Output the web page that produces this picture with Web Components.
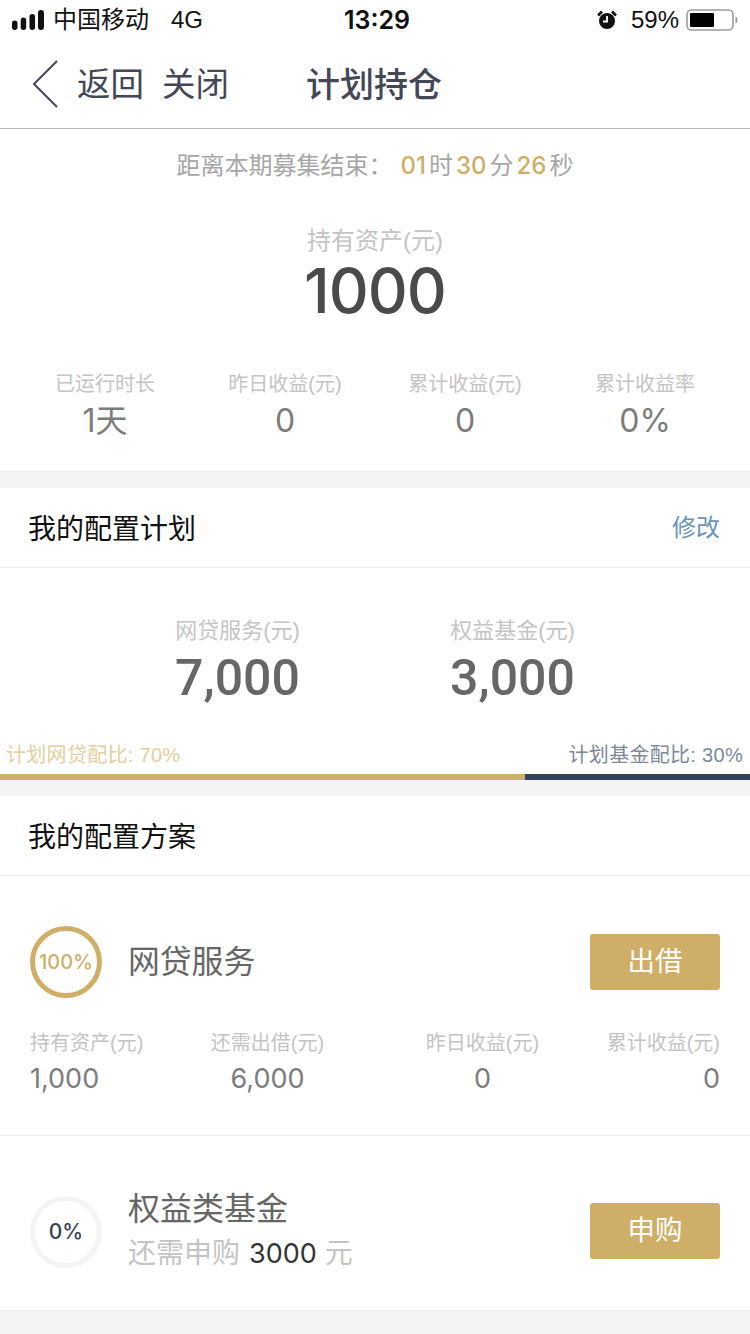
<!DOCTYPE html>
<html lang="zh">
<head>
<meta charset="utf-8">
<title>计划持仓</title>
<style>
    html, body { margin: 0; padding: 0; }
    body {
        width: 750px;
        height: 1334px;
        overflow: hidden;
        background: #f4f4f4;
        font-family: "Liberation Sans", "Noto Sans CJK SC", sans-serif;
        --gold: #cfae68;
        --navy: #34435c;
    }
</style>
</head>
<body>
<status-bar></status-bar>
<nav-bar heading="计划持仓"></nav-bar>
<asset-summary></asset-summary>
<config-section heading="我的配置计划" action="修改" style="margin-top:16px">
    <plan-amounts></plan-amounts>
    <ratio-bar></ratio-bar>
</config-section>
<config-section heading="我的配置方案" style="margin-top:16px">
    <loan-scheme></loan-scheme>
    <fund-scheme></fund-scheme>
</config-section>

<script>
    const ROBOTO = '"Roboto", "Noto Sans CJK SC", sans-serif';
    const INTER = '"Inter", "Noto Sans CJK SC", sans-serif';

    customElements.define('status-bar', class extends HTMLElement {
        constructor() {
            super();
            this.attachShadow({ mode: 'open' }).innerHTML = `
                <style>
                    :host { display: grid; grid-template-columns: 1fr auto 1fr; align-items: center; height: 40px; padding: 0 12px; background: #fff; color: #111; font-size: 24px; line-height: 28px; }
                    .left, .right { display: flex; align-items: center; }
                    .left span:first-of-type { margin-left: 9px; }
                    .left span:last-of-type { margin-left: 22px; }
                    .time { font-family: ${INTER}; font-size: 25px; font-weight: 600; position: relative; left: 2px; }
                    .right { justify-content: flex-end; }
                    .right span { margin: 0 7px 0 14px; }
                    svg { display: block; }
                </style>
                <div class="left">
                    <svg width="32" height="20" viewBox="0 0 32 20" fill="#111">
                        <rect x="0" y="10.500" width="5.500" height="9.500" rx="2.750"/>
                        <rect x="8.700" y="7.500" width="5.500" height="12.500" rx="2.750"/>
                        <rect x="17.500" y="4" width="5.500" height="16" rx="2.750"/>
                        <rect x="26" y="0" width="6" height="20" rx="3"/>
                    </svg>
                    <span>中国移动</span><span>4G</span>
                </div>
                <div class="time">13:29</div>
                <div class="right">
                    <svg width="20" height="20" viewBox="0 0 20 20">
                        <circle cx="10" cy="11" r="8" fill="#111"/>
                        <path d="M10 6v5.500H6" fill="none" stroke="#fff" stroke-width="1.800"/>
                        <path d="M1 5.500 5 1.500M19 5.500 15 1.500" stroke="#111" stroke-width="2.600"/>
                    </svg>
                    <span>59%</span>
                    <svg width="52" height="22" viewBox="0 0 52 22">
                        <rect x="1" y="1" width="46" height="20" rx="4.500" fill="none" stroke="#9c9c9c" stroke-width="1.600"/>
                        <rect x="4" y="4" width="24" height="14" rx="1" fill="#000"/>
                        <path d="M49.500 7.500c1.500.5 2 2 2 3.500s-.5 3-2 3.500z" fill="#9c9c9c"/>
                    </svg>
                </div>`;
        }
    });

    customElements.define('nav-bar', class extends HTMLElement {
        constructor() {
            super();
            this.attachShadow({ mode: 'open' }).innerHTML = `
                <style>
                    :host { display: grid; grid-template-columns: 1fr auto 1fr; align-items: center; height: 86px; padding: 2px 0 0 32px; background: #fff; color: #444757; border-bottom: 1px solid #b8b8b8; font-size: 33.500px; line-height: 40px; }
                    .links { display: flex; align-items: center; }
                    svg { display: block; margin: -2px 19px 0 0; }
                    .close { margin-left: 18px; }
                    h1 { margin: 0; font-size: 34px; font-weight: 500; position: relative; left: -17px; }
                </style>
                <div class="links">
                    <svg width="26" height="48" viewBox="0 0 26 48"><path d="M25 1 2 24l23 23" fill="none" stroke="#444757" stroke-width="2"/></svg>
                    <span>返回</span><span class="close">关闭</span>
                </div>
                <h1>${this.getAttribute('heading')}</h1>
                <div></div>`;
        }
    });

    customElements.define('stat-item', class extends HTMLElement {
        constructor() {
            super();
            this.attachShadow({ mode: 'open' }).innerHTML = `
                <style>
                    :host { display: block; text-align: center; }
                    .label { font-size: 20px; line-height: 28px; color: #c4c4c4; }
                    .value { font-family: ${INTER}; font-size: 32px; line-height: 46px; color: #7c7c7c; }
                </style>
                <div class="label">${this.getAttribute('label')}</div>
                <div class="value">${this.getAttribute('value')}</div>`;
        }
    });

    customElements.define('asset-summary', class extends HTMLElement {
        constructor() {
            super();
            this.attachShadow({ mode: 'open' }).innerHTML = `
                <style>
                    :host { display: block; background: #fff; border-bottom: 1px solid #ececec; text-align: center; padding-bottom: 27px; }
                    .count { display: flex; justify-content: center; height: 74px; line-height: 74px; font-size: 24px; color: #a6a6a6; }
                    .count b { font-family: ${INTER}; font-weight: 500; color: var(--gold); margin: 0 3px; }
                    .count .sep { margin-right: 5px; }
                    .label { margin-top: 20px; font-size: 24px; line-height: 36px; color: #c4c4c4; }
                    .total { font-family: ${INTER}; font-size: 62px; line-height: 64px; font-weight: 500; color: #4a4a4a; letter-spacing: -1px; }
                    .stats { display: grid; grid-template-columns: repeat(4, 1fr); padding: 0 15px; margin-top: 47px; }
                </style>
                <div class="count"><span class="sep">距离本期募集结束：</span><b>01</b><span>时</span><b>30</b><span>分</span><b>26</b><span>秒</span></div>
                <div class="label">持有资产(元)</div>
                <div class="total">1000</div>
                <div class="stats">
                    <stat-item label="已运行时长" value="1天"></stat-item>
                    <stat-item label="昨日收益(元)" value="0"></stat-item>
                    <stat-item label="累计收益(元)" value="0"></stat-item>
                    <stat-item label="累计收益率" value="0%"></stat-item>
                </div>`;
        }
    });

    customElements.define('config-section', class extends HTMLElement {
        constructor() {
            super();
            const action = this.getAttribute('action');
            this.attachShadow({ mode: 'open' }).innerHTML = `
                <style>
                    :host { display: block; background: #fff; }
                    header { display: flex; justify-content: space-between; align-items: center; height: 79px; padding: 0 30px 0 28px; border-bottom: 1px solid #ececec; line-height: 36px; }
                    h2 { margin: 0; padding-top: 4px; font-size: 28px; font-weight: 400; color: #111; }
                    a { font-size: 24px; color: #6a93b8; }
                </style>
                <header><h2>${this.getAttribute('heading')}</h2>${action ? `<a>${action}</a>` : ''}</header>
                <slot></slot>`;
        }
    });

    customElements.define('plan-amounts', class extends HTMLElement {
        constructor() {
            super();
            this.attachShadow({ mode: 'open' }).innerHTML = `
                <style>
                    :host { display: flex; justify-content: center; padding-top: 47px; text-align: center; }
                    div { width: 275px; }
                    .label { font-size: 22px; line-height: 32px; color: #c4c4c4; }
                    .value { font-family: ${ROBOTO}; font-size: 50px; line-height: 63px; font-weight: 500; color: #666; }
                </style>
                <div><div class="label">网贷服务(元)</div><div class="value">7,000</div></div>
                <div><div class="label">权益基金(元)</div><div class="value">3,000</div></div>`;
        }
    });

    customElements.define('ratio-bar', class extends HTMLElement {
        constructor() {
            super();
            this.attachShadow({ mode: 'open' }).innerHTML = `
                <style>
                    :host { display: block; margin-top: 30px; }
                    .labels { display: flex; justify-content: space-between; padding: 0 7px 0 6px; font-size: 20px; line-height: 30px; letter-spacing: .3px; }
                    .gold { color: #e3cfa0; }
                    .navy { color: #7d8899; }
                    .bar { display: flex; height: 6px; margin-top: 4px; }
                    .bar i { display: block; }
                </style>
                <div class="labels"><span class="gold">计划网贷配比: 70%</span><span class="navy">计划基金配比: 30%</span></div>
                <div class="bar">
                    <i style="width:70%;background:var(--gold)"></i>
                    <i style="width:30%;background:var(--navy)"></i>
                </div>`;
        }
    });

    customElements.define('progress-ring', class extends HTMLElement {
        constructor() {
            super();
            this.attachShadow({ mode: 'open' }).innerHTML = `
                <style>
                    :host { display: flex; align-items: center; justify-content: center; flex: none; box-sizing: border-box; width: 72px; height: 72px; border-radius: 50%; border: 5px solid var(--ring); color: var(--ink); font-family: ${INTER}; font-size: var(--ring-size, 20px); font-weight: 500; line-height: 24px; }
                </style>
                <slot></slot>`;
        }
    });

    customElements.define('gold-button', class extends HTMLElement {
        constructor() {
            super();
            this.attachShadow({ mode: 'open' }).innerHTML = `
                <style>
                    :host { display: flex; align-items: center; justify-content: center; flex: none; width: 130px; height: 56px; margin-left: auto; border-radius: 3px; background: var(--gold); color: #fff; font-size: 27.500px; line-height: 32px; }
                </style>
                <slot></slot>`;
        }
    });

    customElements.define('loan-scheme', class extends HTMLElement {
        constructor() {
            super();
            this.attachShadow({ mode: 'open' }).innerHTML = `
                <style>
                    :host { display: block; padding: 50px 30px 34px; border-bottom: 1px solid #ececec; }
                    .top { display: flex; align-items: center; }
                    .name { margin-left: 26px; font-size: 31.800px; line-height: 40px; color: #666; }
                    .grid { display: grid; grid-template-columns: 130px 215px 215px 130px; margin-top: 31px; text-align: center; }
                    .grid > div:first-child { text-align: left; white-space: nowrap; }
                    .grid > div:last-child { text-align: right; white-space: nowrap; }
                    .label { font-size: 20px; line-height: 28px; color: #c4c4c4; }
                    .value { font-family: ${INTER}; font-size: 27px; line-height: 44px; color: #7c7c7c; }
                    progress-ring { --ring: var(--gold); --ink: var(--gold); }
                </style>
                <div class="top">
                    <progress-ring>100%</progress-ring>
                    <span class="name">网贷服务</span>
                    <gold-button>出借</gold-button>
                </div>
                <div class="grid">
                    <div><div class="label">持有资产(元)</div><div class="value">1,000</div></div>
                    <div><div class="label">还需出借(元)</div><div class="value">6,000</div></div>
                    <div><div class="label">昨日收益(元)</div><div class="value">0</div></div>
                    <div><div class="label">累计收益(元)</div><div class="value">0</div></div>
                </div>`;
        }
    });

    customElements.define('fund-scheme', class extends HTMLElement {
        constructor() {
            super();
            this.attachShadow({ mode: 'open' }).innerHTML = `
                <style>
                    :host { display: flex; align-items: center; padding: 51px 30px 33px; border-bottom: 1px solid #ececec; }
                    .text { margin-left: 26px; }
                    .name { font-size: 32px; line-height: 44px; color: #666; }
                    .sub { display: flex; font-size: 28px; line-height: 46px; color: #c4c4c4; }
                    .sub b { font-family: ${INTER}; font-size: 27px; font-weight: 400; color: #333; margin: 0 8px 0 9px; }
                    progress-ring { --ring: #f4f4f4; --ink: var(--navy); --ring-size: 21px; }
                    gold-button { margin-top: -2px; }
                </style>
                <progress-ring>0%</progress-ring>
                <div class="text">
                    <div class="name">权益类基金</div>
                    <div class="sub"><span>还需申购</span><b>3000</b><span>元</span></div>
                </div>
                <gold-button>申购</gold-button>`;
        }
    });
</script>
</body>
</html>
